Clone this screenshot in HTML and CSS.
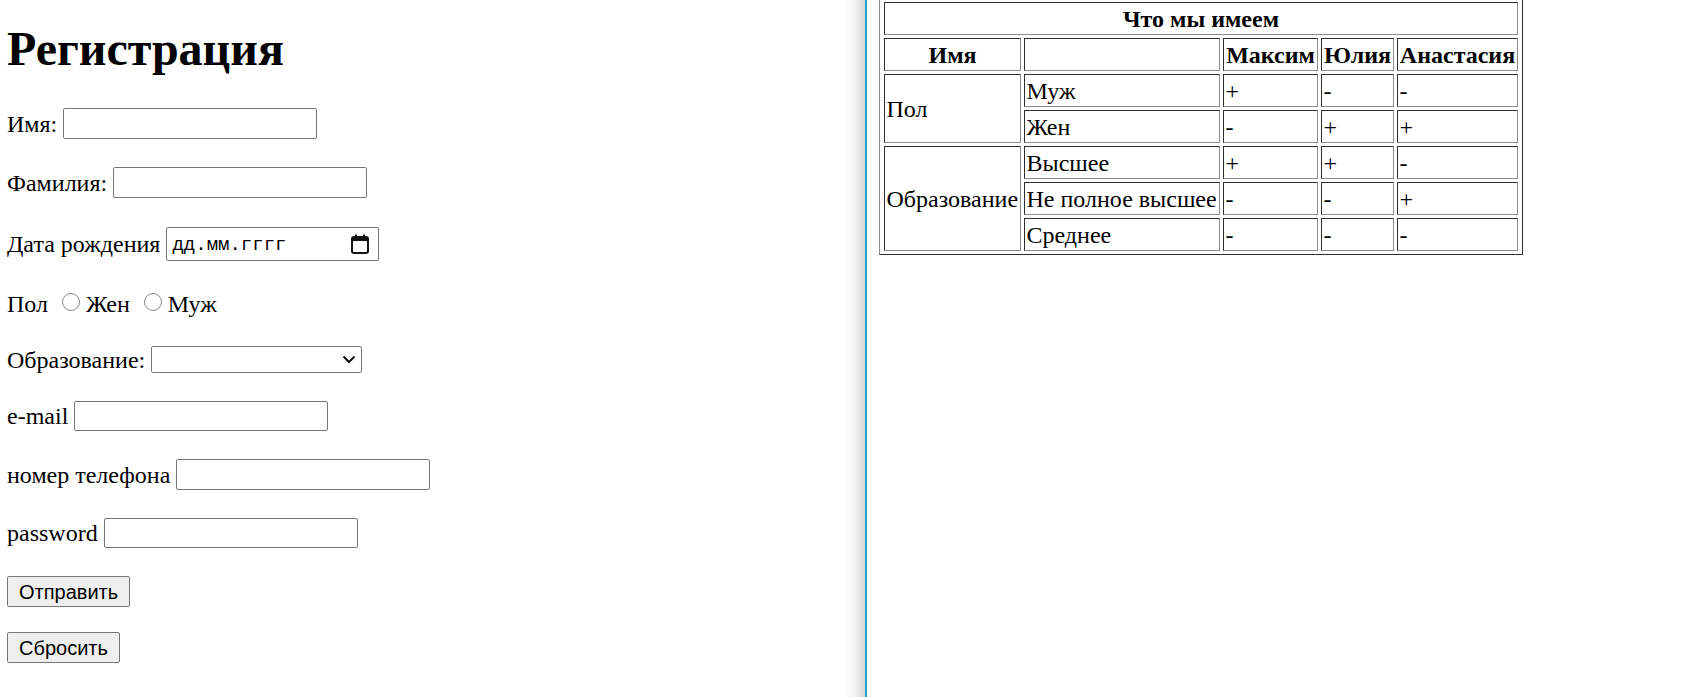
FILE: index.html
```html
<!DOCTYPE html>
<html lang="ru">
<head>
<meta charset="utf-8">
<title>Регистрация</title>
<link rel="stylesheet" href="styles.css">
</head>
<body>
<div class="screen">
  <section class="left">
    <h1 class="title">Регистрация</h1>
    <form class="form">
      <label class="row">Имя:<input class="field" type="text"></label>
      <label class="row">Фамилия:<input class="field" type="text"></label>
      <div class="row row--date">Дата рождения
        <div class="date">
          <span class="date-text">дд.мм.гггг</span>
          <svg class="date-icon" width="18" height="20" viewBox="0 0 18 20">
            <rect x="1" y="3" width="16" height="16" rx="2" fill="none" stroke="#111" stroke-width="2"/>
            <rect x="1" y="3" width="16" height="4" fill="#111"/>
            <rect x="4" y="0.5" width="2" height="3.5" fill="#111"/>
            <rect x="12" y="0.5" width="2" height="3.5" fill="#111"/>
          </svg>
        </div>
      </div>
      <div class="row row--radio">
        <span>Пол</span>
        <label class="opt"><input class="radio" type="radio" name="sex">Жен</label>
        <label class="opt"><input class="radio" type="radio" name="sex">Муж</label>
      </div>
      <label class="row row--select">Образование:
        <span class="select-wrap">
          <select class="select">
            <option></option>
            <option>Высшее</option>
            <option>Не полное высшее</option>
            <option>Среднее</option>
          </select>
          <svg class="select-arrow" width="14" height="9" viewBox="0 0 14 9">
            <polyline points="1.5,1.5 7,7 12.5,1.5" fill="none" stroke="#111" stroke-width="2"/>
          </svg>
        </span>
      </label>
      <label class="row row--short">e-mail<input class="field field--short" type="email"></label>
      <label class="row">номер телефона<input class="field" type="tel"></label>
      <label class="row row--short">password<input class="field field--short" type="password"></label>
      <div class="buttons">
        <button class="btn" type="submit">Отправить</button>
        <button class="btn" type="reset">Сбросить</button>
      </div>
    </form>
  </section>
  <div class="shade"></div>
  <div class="edge"></div>
  <section class="right">
    <table class="table">
      <tr><th colspan="5">Что мы имеем</th></tr>
      <tr><th class="w1">Имя</th><th class="w2"></th><th class="w3">Максим</th><th class="w4">Юлия</th><th class="w5">Анастасия</th></tr>
      <tr><td rowspan="2">Пол</td><td>Муж</td><td>+</td><td>-</td><td>-</td></tr>
      <tr><td>Жен</td><td>-</td><td>+</td><td>+</td></tr>
      <tr><td rowspan="3">Образование</td><td>Высшее</td><td>+</td><td>+</td><td>-</td></tr>
      <tr><td>Не полное высшее</td><td>-</td><td>-</td><td>+</td></tr>
      <tr><td>Среднее</td><td>-</td><td>-</td><td>-</td></tr>
    </table>
  </section>
</div>
</body>
</html>
```

FILE: styles.css
```css
* { box-sizing: border-box; }
html, body { margin: 0; height: 100%; }
body {
  background: #fff;
  color: #000;
  font-family: "Liberation Serif", "Times New Roman", serif;
  font-size: 24px;
  overflow: hidden;
}
.screen { display: flex; height: 697px; }
.left { width: 845px; flex: none; padding: 21px 0 0 7px; }
.shade {
  width: 20px;
  flex: none;
  background: linear-gradient(to right, #ffffff, #f4f4f4 45%, #d6d6d6);
}
.edge { width: 2px; flex: none; background: #1ba6c5; }
.right { flex: 1; padding: 0 0 0 12px; }

.title { margin: 0; font-size: 48px; line-height: 56px; font-weight: bold; }

.form { display: flex; flex-direction: column; gap: 28px; margin-top: 31px; }
.row {
  display: flex;
  align-items: center;
  gap: 6px;
  height: 31px;
  line-height: 28px;
  white-space: nowrap;
}
.row--date { height: 35px; }
.row--radio { height: 29px; gap: 0; }
.row--select { height: 27px; }
.row--short { height: 30px; }

.field {
  flex: none;
  width: 254px;
  height: 31px;
  margin: 0;
  padding: 1px 3px;
  border: 1px solid #767676;
  border-radius: 2px;
  background: #fff;
  font: 20px "Liberation Sans", Arial, sans-serif;
}
.field--short { height: 30px; }

.date {
  flex: none;
  width: 213px;
  height: 34px;
  display: flex;
  align-items: center;
  justify-content: space-between;
  padding: 0 9px 0 5px;
  border: 1px solid #767676;
  border-radius: 2px;
  background: #fff;
}
.date-text {
  font: 19px "Liberation Mono", "DejaVu Sans Mono", monospace;
  line-height: 22px;
  padding-top: 3px;
}
.date-icon { display: block; }

.opt { display: flex; align-items: center; }
.radio {
  appearance: none;
  -webkit-appearance: none;
  flex: none;
  width: 18px;
  height: 18px;
  margin: 0 6px 3px 14px;
  border: 1.5px solid #8a8a8a;
  border-radius: 50%;
  background: #fff;
}

.select-wrap { position: relative; flex: none; width: 211px; height: 27px; display: block; }
.select {
  appearance: none;
  -webkit-appearance: none;
  display: block;
  width: 100%;
  height: 100%;
  margin: 0;
  padding: 0 4px;
  border: 1px solid #767676;
  border-radius: 2px;
  background: #fff;
  font: 20px "Liberation Sans", Arial, sans-serif;
}
.select-arrow { position: absolute; left: 191px; top: 9px; pointer-events: none; }

.buttons { display: flex; flex-direction: column; align-items: flex-start; gap: 25px; }
.btn {
  height: 31px;
  margin: 0;
  padding: 0 11px;
  border: 1px solid #767676;
  border-radius: 2px;
  background: #efefef;
  color: #000;
  font: 20px "Liberation Sans", Arial, sans-serif;
  line-height: 22px;
}

.table {
  border-collapse: separate;
  border-spacing: 3px;
  border: 1px solid;
  border-color: #8c8c8c #2e2e2e #2e2e2e #8c8c8c;
  padding: 0 1px;
  margin-top: -2px;
  font-size: 24px;
}
.table th, .table td {
  border: 1px solid;
  border-color: #2e2e2e #8c8c8c #8c8c8c #2e2e2e;
  padding: 1.5px;
  line-height: 28px;
  white-space: nowrap;
}
.table th { font-weight: bold; text-align: center; }
.table td { text-align: left; vertical-align: middle; }
.w1 { width: 137px; }
.w2 { width: 196px; }
.w3 { width: 95px; }
.w4 { width: 73px; }
.w5 { width: 121px; }
```
